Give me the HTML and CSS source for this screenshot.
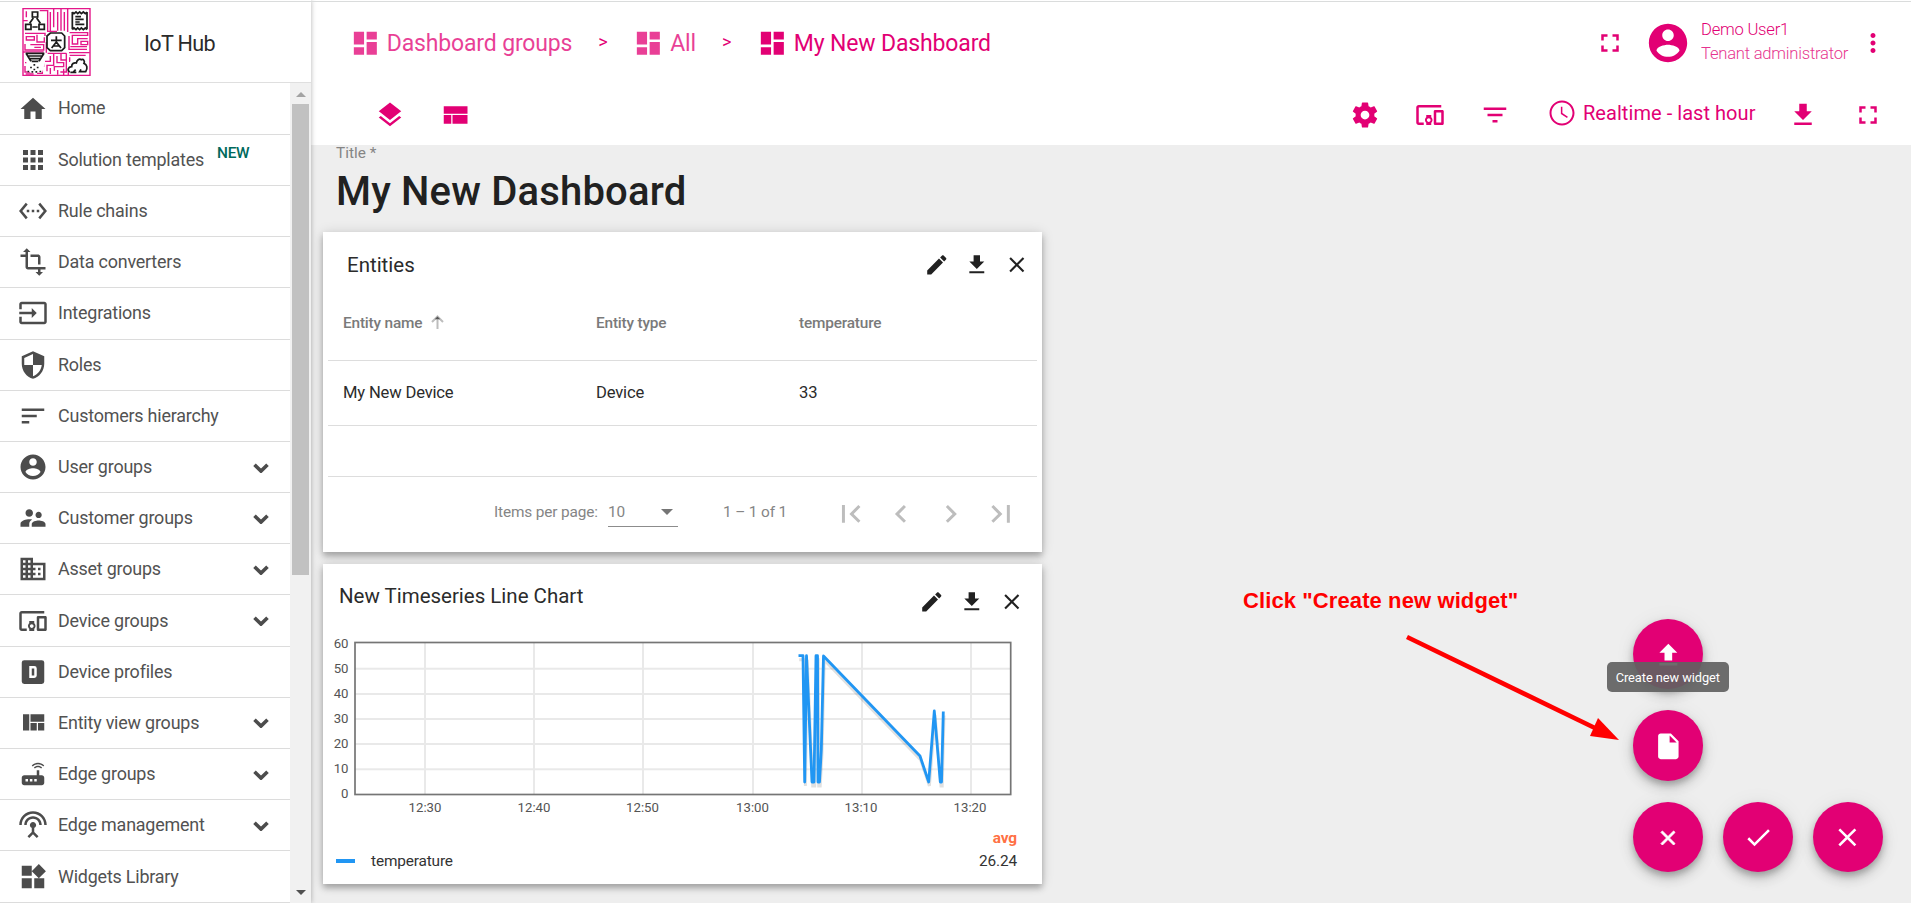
FILE: index.html
```html
<!DOCTYPE html>
<html lang="en">
<head>
<meta charset="utf-8">
<title>IoT Hub - My New Dashboard</title>
<link rel="stylesheet" href="styles.css">
</head>
<body>
<svg class="defs" width="0" height="0">
  <symbol id="home" viewBox="0 0 24 24"><path d="M10 20v-6h4v6h5v-8h3L12 3 2 12h3v8z"/></symbol>
  <symbol id="apps" viewBox="0 0 24 24"><path d="M4 8h4V4H4v4zm6 12h4v-4h-4v4zm-6 0h4v-4H4v4zm0-6h4v-4H4v4zm6 0h4v-4h-4v4zm6-10v4h4V4h-4zm-6 4h4V4h-4v4zm6 6h4v-4h-4v4zm0 6h4v-4h-4v4z"/></symbol>
  <symbol id="ethernet" viewBox="0 0 24 24"><path d="M7.77 6.76L6.23 5.48.82 12l5.41 6.52 1.54-1.28L3.42 12l4.35-5.24zM7 13h2v-2H7v2zm10-2h-2v2h2v-2zm-6 2h2v-2h-2v2zm6.77-7.52l-1.54 1.28L20.58 12l-4.35 5.24 1.54 1.28L23.18 12l-5.41-6.52z"/></symbol>
  <symbol id="transform" viewBox="0 0 24 24"><path d="M22 18v-2H8V4h2L7 1 4 4h2v2H2v2h4v8c0 1.1.9 2 2 2h8v2h-2l3 3 3-3h-2v-2h4zM10 8h6v6h2V8c0-1.1-.9-2-2-2h-6v2z"/></symbol>
  <symbol id="input" viewBox="0 0 24 24"><path d="M21 3.01H3c-1.1 0-2 .9-2 2V9h2V4.99h18v14.03H3V15H1v4.01c0 1.1.9 1.98 2 1.98h18c1.1 0 2-.88 2-1.98v-14c0-1.11-.9-2-2-2zM11 16l4-4-4-4v3H1v2h10v3z"/></symbol>
  <symbol id="security" viewBox="0 0 24 24"><path d="M12 1L3 5v6c0 5.55 3.84 10.74 9 12 5.16-1.26 9-6.45 9-12V5l-9-4zm0 10.99h7c-.53 4.12-3.28 7.79-7 8.94V12H5V6.3l7-3.11v8.8z"/></symbol>
  <symbol id="sort" viewBox="0 0 24 24"><path d="M3 18h6v-2H3v2zM3 6v2h18V6H3zm0 7h12v-2H3v2z"/></symbol>
  <symbol id="account" viewBox="0 0 24 24"><path d="M12 2C6.48 2 2 6.48 2 12s4.48 10 10 10 10-4.48 10-10S17.52 2 12 2zm0 3c1.66 0 3 1.34 3 3s-1.34 3-3 3-3-1.34-3-3 1.34-3 3-3zm0 14.2c-2.5 0-4.71-1.28-6-3.22.03-1.99 4-3.08 6-3.08 1.99 0 5.97 1.09 6 3.08-1.29 1.94-3.5 3.22-6 3.22z"/></symbol>
  <symbol id="supervisor" viewBox="0 0 24 24"><path d="M16.5 12c1.38 0 2.49-1.12 2.49-2.5S17.88 7 16.5 7C15.12 7 14 8.12 14 9.5s1.12 2.5 2.5 2.5zM9 11c1.66 0 2.99-1.34 2.99-3S10.66 5 9 5C7.34 5 6 6.34 6 8s1.34 3 3 3zm7.5 3c-1.83 0-5.5.92-5.5 2.75V19h11v-2.25c0-1.83-3.67-2.75-5.5-2.75zM9 13c-2.33 0-7 1.17-7 3.5V19h7v-2.25c0-.85.33-2.34 2.37-3.47C10.5 13.1 9.66 13 9 13z"/></symbol>
  <symbol id="domain" viewBox="0 0 24 24"><path d="M12 7V3H2v18h20V7H12zM6 19H4v-2h2v2zm0-4H4v-2h2v2zm0-4H4V9h2v2zm0-4H4V5h2v2zm4 12H8v-2h2v2zm0-4H8v-2h2v2zm0-4H8V9h2v2zm0-4H8V5h2v2zm10 12h-8v-2h2v-2h-2v-2h2v-2h-2V9h8v10zm-2-8h-2v2h2v-2zm0 4h-2v2h2v-2z"/></symbol>
  <symbol id="devices" viewBox="0 0 24 24"><path d="M3 6h18V4H3c-1.1 0-2 .9-2 2v12c0 1.1.9 2 2 2h4v-2H3V6zm10 6H9v1.78c-.61.55-1 1.33-1 2.22s.39 1.67 1 2.22V20h4v-1.78c.61-.55 1-1.34 1-2.22s-.39-1.67-1-2.22V12zm-2 5.5c-.83 0-1.5-.67-1.5-1.5s.67-1.5 1.5-1.5 1.5.67 1.5 1.5-.67 1.5-1.5 1.5zM22 8h-6c-.5 0-1 .5-1 1v10c0 .5.5 1 1 1h6c.5 0 1-.5 1-1V9c0-.5-.5-1-1-1zm-1 10h-4v-8h4v8z"/></symbol>
  <symbol id="profile" viewBox="0 0 24 24"><path fill-rule="evenodd" d="M5 2h14a2 2 0 0 1 2 2v16a2 2 0 0 1-2 2H5a2 2 0 0 1-2-2V4a2 2 0 0 1 2-2zM9 7v10h4a2 2 0 0 0 2-2V9a2 2 0 0 0-2-2H9zm2 2h2v6h-2V9z" transform="translate(0 .6) scale(1 .95)"/></symbol>
  <symbol id="quilt" viewBox="0 0 24 24"><path d="M10 18h5v-6h-5v6zm-6 0h5V5H4v13zm12 0h5v-6h-5v6zM10 5v6h11V5H10z"/></symbol>
  <symbol id="router" viewBox="0 0 24 24"><path d="M20.2 5.9l.8-.8C19.6 3.7 17.8 3 16 3s-3.6.7-5 2.1l.8.8C13 4.8 14.5 4.2 16 4.2s3 .6 4.2 1.7zm-.9.8c-.9-.9-2.1-1.4-3.3-1.4s-2.4.5-3.3 1.4l.8.8c.7-.7 1.6-1 2.5-1s1.8.3 2.5 1l.8-.8zM19 13h-2V9h-2v4H5c-1.1 0-2 .9-2 2v4c0 1.1.9 2 2 2h14c1.1 0 2-.9 2-2v-4c0-1.1-.9-2-2-2zM8 18H6v-2h2v2zm3.5 0h-2v-2h2v2zm3.5 0h-2v-2h2v2z"/></symbol>
  <symbol id="antenna" viewBox="0 0 24 24"><path d="M12 5c-3.87 0-7 3.13-7 7h2c0-2.76 2.24-5 5-5s5 2.24 5 5h2c0-3.87-3.13-7-7-7zm1 9.29c.88-.39 1.5-1.26 1.5-2.29 0-1.38-1.12-2.5-2.5-2.5S9.5 10.62 9.5 12c0 1.02.62 1.9 1.5 2.29v3.3L7.59 21 9 22.41l3-3 3 3L16.41 21 13 17.59v-3.3zM12 1C5.93 1 1 5.93 1 12h2c0-4.97 4.03-9 9-9s9 4.03 9 9h2c0-6.07-4.93-11-11-11z"/></symbol>
  <symbol id="widgets" viewBox="0 0 24 24"><path d="M13 13v8h8v-8h-8zM3 21h8v-8H3v8zM3 3v8h8V3H3zm13.66-1.31L11 7.34 16.66 13l5.66-5.66-5.66-5.65z"/></symbol>
  <symbol id="chev" viewBox="0 0 16 10"><path d="M1.5 1.7L8 8.1l6.5-6.4" fill="none" stroke="currentColor" stroke-width="3.6"/></symbol>
  <symbol id="dashboard" viewBox="0 0 24 24"><path d="M3 13h8V3H3v10zm0 8h8v-6H3v6zm10 0h8V11h-8v10zm0-18v6h8V3h-8z"/></symbol>
  <symbol id="layers" viewBox="0 0 24 24"><path d="M11.99 18.54l-7.37-5.73L3 14.07l9 7 9-7-1.63-1.27-7.38 5.74zM12 16l7.36-5.73L21 9l-9-7-9 7 1.63 1.27L12 16z"/></symbol>
  <symbol id="compact" viewBox="0 0 24 24"><path d="M3 19h6v-7H3v7zm7 0h12v-7H10v7zM3 5v6h19V5H3z"/></symbol>
  <symbol id="gear" viewBox="0 0 24 24"><path d="M19.43 12.98c.04-.32.07-.64.07-.98s-.03-.66-.07-.98l2.11-1.65c.19-.15.24-.42.12-.64l-2-3.46c-.12-.22-.39-.3-.61-.22l-2.49 1c-.52-.4-1.08-.73-1.69-.98l-.38-2.65C14.46 2.18 14.25 2 14 2h-4c-.25 0-.46.18-.49.42l-.38 2.65c-.61.25-1.17.59-1.69.98l-2.49-1c-.23-.09-.49 0-.61.22l-2 3.46c-.13.22-.07.49.12.64l2.11 1.65c-.04.32-.07.65-.07.98s.03.66.07.98l-2.11 1.65c-.19.15-.24.42-.12.64l2 3.46c.12.22.39.3.61.22l2.49-1c.52.4 1.08.73 1.69.98l.38 2.65c.03.24.24.42.49.42h4c.25 0 .46-.18.49-.42l.38-2.65c.61-.25 1.17-.59 1.69-.98l2.49 1c.23.09.49 0 .61-.22l2-3.46c.12-.22.07-.49-.12-.64l-2.11-1.65zM12 15.5c-1.93 0-3.5-1.57-3.5-3.5s1.57-3.5 3.5-3.5 3.5 1.57 3.5 3.5-1.57 3.5-3.5 3.5z"/></symbol>
  <symbol id="filter" viewBox="0 0 24 24"><path d="M10 18h4v-2h-4v2zM3 6v2h18V6H3zm3 7h12v-2H6v2z"/></symbol>
  <symbol id="clock" viewBox="0 0 24 24"><path d="M11.99 2C6.47 2 2 6.48 2 12s4.47 10 9.99 10C17.52 22 22 17.52 22 12S17.52 2 11.99 2zM12 20.4c-4.64 0-8.4-3.76-8.4-8.4S7.36 3.6 12 3.6s8.4 3.76 8.4 8.4-3.76 8.4-8.4 8.4zM12.3 7H11.1v5.7l4.9 3.2.7-1-4.4-2.9z"/></symbol>
  <symbol id="download" viewBox="0 0 24 24"><path d="M19 9h-4V3H9v6H5l7 7 7-7zM5 18v2h14v-2H5z"/></symbol>
  <symbol id="upload" viewBox="0 0 24 24"><path d="M9 16h6v-6h4l-7-7-7 7h4zm-4 2h14v2H5z"/></symbol>
  <symbol id="full" viewBox="0 0 24 24"><path d="M7 14H5v5h5v-2H7v-3zm-2-4h2V7h3V5H5v5zm12 7h-3v2h5v-5h-2v3zM14 5v2h3v3h2V5h-5z"/></symbol>
  <symbol id="more" viewBox="0 0 24 24"><path d="M12 8c1.1 0 2-.9 2-2s-.9-2-2-2-2 .9-2 2 .9 2 2 2zm0 2c-1.1 0-2 .9-2 2s.9 2 2 2 2-.9 2-2-.9-2-2-2zm0 6c-1.1 0-2 .9-2 2s.9 2 2 2 2-.9 2-2-.9-2-2-2z"/></symbol>
  <symbol id="edit" viewBox="0 0 24 24"><path d="M3 17.25V21h3.75L17.81 9.94l-3.75-3.75L3 17.25zM20.71 7.04c.39-.39.39-1.02 0-1.41l-2.34-2.34c-.39-.39-1.02-.39-1.41 0l-1.83 1.83 3.75 3.75 1.83-1.83z"/></symbol>
  <symbol id="close" viewBox="0 0 24 24"><path d="M19 6.41L17.59 5 12 10.59 6.41 5 5 6.41 10.59 12 5 17.59 6.41 19 12 13.41 17.59 19 19 17.59 13.41 12z"/></symbol>
  <symbol id="check" viewBox="0 0 24 24"><path d="M9 16.17L4.83 12l-1.42 1.41L9 19 21 7l-1.41-1.41z"/></symbol>
  <symbol id="file" viewBox="0 0 24 24"><path d="M6 2c-1.1 0-1.99.9-1.99 2L4 20c0 1.1.89 2 1.99 2H18c1.1 0 2-.9 2-2V8l-6-6H6zm7 7V3.5L18.5 9H13z"/></symbol>
  <symbol id="first" viewBox="0 0 24 24"><path d="M18.41 16.59L13.82 12l4.59-4.59L17 6l-6 6 6 6zM6 6h2v12H6z"/></symbol>
  <symbol id="prev" viewBox="0 0 24 24"><path d="M15.41 7.41L14 6l-6 6 6 6 1.41-1.41L10.83 12z"/></symbol>
  <symbol id="next" viewBox="0 0 24 24"><path d="M10 6L8.59 7.41 13.17 12l-4.58 4.59L10 18l6-6z"/></symbol>
  <symbol id="last" viewBox="0 0 24 24"><path d="M5.59 7.41L10.18 12l-4.59 4.59L7 18l6-6-6-6zM16 6h2v12h-2z"/></symbol>
</svg>

<div class="app">
  <aside class="sidebar">
    <header class="brand">
      <svg class="logo" viewBox="36 24 205 204">
        <rect x="36" y="24" width="205" height="204" fill="#fff"/>
        <g class="maze">
          <path d="M38 24V228M36 26H241M239 24V228M36 226H241"/>
          <path d="M88 32H112V60M120 36V92M130 26V82M142 36V92M152 26V92M162 36V92M172 26V96M110 94H140M112 60V94M48 34V52M38 62H52"/>
          <path d="M44 100H104V108M48 110H72V120H48ZM80 104V126H102V112M44 132V150H100V134H60M72 142H92M108 126V158M38 156H100"/>
          <path d="M178 98H232V106H186V132H202V116H232M212 124H232V134H212ZM176 108V148H230M176 158H238M180 140H230M178 166H226"/>
          <path d="M112 160H168M120 168V184H104M130 162V196H110V214M140 168V188H160V200H132V212M152 162V180H168M168 160V216H150M120 204V222M142 210V224M160 206V226M178 172V186M184 216H174V226"/>
          <path d="M44 188H56M44 198V216H60M100 188V198H92M96 208V220H80M46 222H70"/>
        </g>
        <g class="knock">
          <path d="M62 32h26v22h14v38H42V68h20zM182 32h50v60h-50zM110 96h56v56h-56zM44 158h60v30l-8 28H52zM170 196l22-24h26l16 22v26h-56z"/>
        </g>
        <g class="ink">
          <path d="M66 36H82V51H66ZM46 73H62V88H46ZM86 73H102V88H86ZM69 54L58 70M79 54L90 70M66 81H82M186 36V88M230 36V88M186 36l5 5 6-5 5 5 6-5 5 5 6-5 6 5 5-5M186 89l5-5 6 5 5-5 6 5 5-5 6 5 6-5 5 5M195 50H212M195 58H220M195 66H208M195 73H222"/>
          <path d="M120 99H154L163 108V143L154 152H120L110 143V108ZM138 109V128M122 121H154M138 126L124 144M138 126L152 144M128 138H148" />
          <path d="M46 160H102M50 168H98M56 176H92M64 184H84M47 160L62 184M101 160L86 184"/>
          <path d="M72 192v5M62 200v5M82 200v5M72 206v5M54 212v5M66 213v5M78 213v5M90 212v5"/>
          <path d="M178 216c-8-5-5-15 6-16 0-9 6-13 14-11 2-9 8-14 15-10 7-3 11 5 8 11 9 3 12 15 5 25H208l4-7M188 217l8-8M180 217H198"/>
        </g>
      </svg>
      <span class="brand-name">IoT Hub</span>
    </header>
    <div class="side-body">
      <nav class="menu">
        <a class="item"><svg><use href="#home"/></svg><span>Home</span></a>
        <a class="item"><svg><use href="#apps"/></svg><span>Solution templates</span><sup>NEW</sup></a>
        <a class="item"><svg><use href="#ethernet"/></svg><span>Rule chains</span></a>
        <a class="item"><svg><use href="#transform"/></svg><span>Data converters</span></a>
        <a class="item"><svg><use href="#input"/></svg><span>Integrations</span></a>
        <a class="item"><svg><use href="#security"/></svg><span>Roles</span></a>
        <a class="item"><svg><use href="#sort"/></svg><span>Customers hierarchy</span></a>
        <a class="item"><svg><use href="#account"/></svg><span>User groups</span><svg class="chev"><use href="#chev"/></svg></a>
        <a class="item"><svg><use href="#supervisor"/></svg><span>Customer groups</span><svg class="chev"><use href="#chev"/></svg></a>
        <a class="item"><svg><use href="#domain"/></svg><span>Asset groups</span><svg class="chev"><use href="#chev"/></svg></a>
        <a class="item"><svg><use href="#devices"/></svg><span>Device groups</span><svg class="chev"><use href="#chev"/></svg></a>
        <a class="item"><svg><use href="#profile"/></svg><span>Device profiles</span></a>
        <a class="item"><svg><use href="#quilt"/></svg><span>Entity view groups</span><svg class="chev"><use href="#chev"/></svg></a>
        <a class="item"><svg><use href="#router"/></svg><span>Edge groups</span><svg class="chev"><use href="#chev"/></svg></a>
        <a class="item"><svg><use href="#antenna"/></svg><span>Edge management</span><svg class="chev"><use href="#chev"/></svg></a>
        <a class="item"><svg><use href="#widgets"/></svg><span>Widgets Library</span></a>
      </nav>
      <div class="scrollbar"><i class="up"></i><b></b><i class="down"></i></div>
    </div>
  </aside>

  <main class="main">
    <header class="topbar">
      <nav class="crumbs">
        <a class="crumb dim"><svg><use href="#dashboard"/></svg><span>Dashboard groups</span></a>
        <span class="sep">&gt;</span>
        <a class="crumb dim"><svg><use href="#dashboard"/></svg><span>All</span></a>
        <span class="sep">&gt;</span>
        <a class="crumb"><svg><use href="#dashboard"/></svg><span>My New Dashboard</span></a>
      </nav>
      <div class="user">
        <svg class="ic"><use href="#full"/></svg>
        <svg class="avatar"><use href="#account"/></svg>
        <div class="who"><span>Demo User1</span><span class="role">Tenant administrator</span></div>
        <svg class="ic"><use href="#more"/></svg>
      </div>
    </header>
    <div class="toolbar">
      <div class="tools-left">
        <svg class="ic"><use href="#layers"/></svg>
        <svg class="ic"><use href="#compact"/></svg>
      </div>
      <div class="tools-right">
        <svg class="ic"><use href="#gear"/></svg>
        <svg class="ic"><use href="#devices"/></svg>
        <svg class="ic"><use href="#filter"/></svg>
        <div class="timewindow"><svg class="ic"><use href="#clock"/></svg><span>Realtime - last hour</span></div>
        <svg class="ic"><use href="#download"/></svg>
        <svg class="ic"><use href="#full"/></svg>
      </div>
    </div>

    <section class="canvas">
      <label class="title-label">Title *</label>
      <h1 class="title">My New Dashboard</h1>

      <article class="card entities">
        <header class="card-head">
          <h2>Entities</h2>
          <div class="actions"><svg><use href="#edit"/></svg><svg><use href="#download"/></svg><svg><use href="#close"/></svg></div>
        </header>
        <div class="table">
          <div class="row head"><span>Entity name <svg class="arrow" viewBox="0 0 13 14"><path d="M6.5 14V2M1 7l5.5-5.5L12 7" fill="none" stroke="#bdbdbd" stroke-width="2"/><path d="M3.8 4.2L6.5 1.5l2.7 2.7z" fill="#555"/></svg></span><span>Entity type</span><span>temperature</span></div>
          <div class="row"><span>My New Device</span><span>Device</span><span>33</span></div>
          <div class="row blank"></div>
        </div>
        <footer class="pager">
          <span class="ipp">Items per page:</span>
          <span class="select">10<i></i></span>
          <span class="range">1 – 1 of 1</span>
          <div class="pages"><svg><use href="#first"/></svg><svg><use href="#prev"/></svg><svg><use href="#next"/></svg><svg><use href="#last"/></svg></div>
        </footer>
      </article>

      <article class="card chart">
        <header class="card-head">
          <h2>New Timeseries Line Chart</h2>
          <div class="actions"><svg><use href="#edit"/></svg><svg><use href="#download"/></svg><svg><use href="#close"/></svg></div>
        </header>
        <svg class="plot" viewBox="323 630 719 190">
          <g class="grid">
            <path d="M355 668.7H1011M355 693.9H1011M355 719H1011M355 744H1011M355 769.2H1011M425 643V794M534 643V794M643 643V794M753 643V794M862 643V794M971 643V794"/>
          </g>
          <rect x="355" y="642.5" width="655.7" height="152" class="frame"/>
          <path class="shade" transform="translate(.7 4)" d="M798.5 655.7H803L804.7 782 806.5 655.7 812 782H814L816 655.7H817.5L818 782H819.5L821.3 750 823.5 656 920 756 928.7 782 934.3 711 940.3 782H941.5L943.3 711.5"/>
          <path class="line" d="M798.5 655.7H803L804.7 782 806.5 655.7 812 782H814L816 655.7H817.5L818 782H819.5L821.3 750 823.5 656 920 756 928.7 782 934.3 711 940.3 782H941.5L943.3 711.5"/>
          <g class="ylab">
            <text x="348.5" y="648">60</text><text x="348.5" y="673">50</text><text x="348.5" y="698">40</text><text x="348.5" y="723">30</text><text x="348.5" y="748">20</text><text x="348.5" y="773">10</text><text x="348.5" y="798">0</text>
          </g>
          <g class="xlab">
            <text x="425" y="812">12:30</text><text x="534" y="812">12:40</text><text x="642.5" y="812">12:50</text><text x="752.5" y="812">13:00</text><text x="861" y="812">13:10</text><text x="970" y="812">13:20</text>
          </g>
        </svg>
        <div class="legend">
          <b class="avg">avg</b>
          <div class="series"><i></i><span>temperature</span><span class="val">26.24</span></div>
        </div>
      </article>
    </section>
  </main>

  <div class="fabs">
    <div class="fab-col">
      <button class="fab"><svg><use href="#upload"/></svg></button>
      <button class="fab"><svg><use href="#file"/></svg></button>
      <button class="fab"><svg class="x"><use href="#close"/></svg></button>
      <span class="tooltip">Create new widget</span>
    </div>
    <button class="fab"><svg><use href="#check"/></svg></button>
    <button class="fab"><svg><use href="#close"/></svg></button>
  </div>

  <div class="callout">Click "Create new widget"</div>
  <svg class="pointer" viewBox="0 0 216 110"><path d="M2 4L192 96" stroke="#f00" stroke-width="4.6"/><path d="M193 85L214 107 185 103z" fill="#f00"/></svg>
</div>
</body>
</html>
```
FILE: styles.css
```css
* { box-sizing: border-box; }
body { margin: 0; font-family: Roboto, "Open Sans", sans-serif; overflow: hidden; background: #eee; }
svg { fill: currentColor; display: block; flex: none; }
.defs { position: absolute; }
.app { position: relative; display: flex; width: 1911px; height: 903px; overflow: hidden; }
.app::before { content: ""; position: absolute; z-index: 5; left: 0; right: 0; top: 1px; height: 1px; background: #dadcdc; }

/* Sidebar */
.sidebar { width: 311px; flex: none; display: flex; flex-direction: column; background: #fff; z-index: 3; box-shadow: 0 0 5px rgba(0,0,0,.3); }
.brand { height: 83px; flex: none; display: flex; align-items: center; padding: 2px 0 0 22px; border-bottom: 1px solid #dfdfdf; }
.logo { width: 69px; height: 68px; }
.maze path { fill: none; stroke: #e4178a; stroke-width: 4.2; }
.knock { fill: #fff; }
.ink path { fill: none; stroke: #1c1c1c; stroke-width: 5.2; }
.brand-name { margin: 2px 0 0 53px; font-size: 21.6px; letter-spacing: -.65px; color: #2b2b2b; }
.side-body { flex: 1; display: flex; min-height: 0; }
.menu { width: 290px; padding-top: .6px; }
.item { position: relative; height: 51.2px; display: flex; align-items: center; padding-left: 18px; border-bottom: 1px solid #dcdcdc; font-size: 17.92px; letter-spacing: -.2px; color: #4c4c4c; }
.item svg { width: 30px; height: 30px; }
.item span { margin: -1px 0 0 10px; color: #525252; }
.item:first-child span { margin-top: -2px; }
.item sup { margin: -14px 0 0 13px; font-size: 15.4px; line-height: 18px; font-weight: 500; letter-spacing: -.3px; color: #00695c; vertical-align: baseline; }
.item svg.chev { width: 16px; height: 10px; margin: 1px 21.5px 0 auto; }
.scrollbar { width: 21px; background: #f1f1f1; display: flex; flex-direction: column; align-items: center; }
.scrollbar b { width: 17px; height: 471px; margin-top: 7px; background: #c1c1c1; }
.scrollbar i { border: 5px solid transparent; }
.scrollbar .up { border-top: 0; border-bottom-color: #a3a3a3; margin-top: 9px; }
.scrollbar .down { border-bottom: 0; border-top-color: #505050; margin: auto 0 8px; }

/* Header bars */
.main { flex: 1; display: flex; flex-direction: column; min-width: 0; color: #e20074; }
.topbar { height: 82px; flex: none; background: #fff; display: flex; justify-content: space-between; align-items: center; padding: 4px 23px 0 39px; }
.ic { width: 30px; height: 30px; }
.crumbs { display: flex; align-items: center; font-size: 23px; letter-spacing: -.15px; }
.crumb { display: flex; align-items: center; gap: 6px; }
.crumb svg { width: 30.7px; height: 30.7px; }
.dim { opacity: .75; }
.sep { width: 61.2px; text-align: center; font-size: 18px; padding-bottom: 4px; }
.user { display: flex; align-items: center; }
.avatar { width: 46px; height: 46px; margin: 0 10px 0 20px; }
.who { width: 157px; margin-top: -2px; display: flex; flex-direction: column; font-size: 16.6px; line-height: 24px; font-weight: 300; letter-spacing: -.22px; }
.role { opacity: .8; }
.toolbar { height: 63px; flex: none; background: #fff; display: flex; justify-content: space-between; align-items: center; padding: 3px 28px 0 64px; }
.tools-left { display: flex; gap: 35px; }
.tools-right { display: flex; align-items: center; gap: 35px; }
.timewindow { display: flex; align-items: center; gap: 6px; font-size: 20px; letter-spacing: .05px; white-space: nowrap; width: 208px; margin: -4px -2px 0 2px; }

/* Dashboard */
.canvas { flex: 1; padding: 0 0 0 12px; color: #212121; }
.title-label { display: block; margin: -2px 0 0 13px; font-size: 15.4px; line-height: 20px; color: #858585; }
.title { margin: 5px 0 0 13px; font-size: 40px; line-height: 48px; letter-spacing: .18px; font-weight: 500; height: 64px; }
.card { width: 719px; height: 320px; background: #fff; box-shadow: 0 4px 6px rgba(0,0,0,.26), 0 1px 12px rgba(0,0,0,.14); display: flex; flex-direction: column; }
.card-head { display: flex; justify-content: space-between; }
.card-head h2 { margin: 0; font-size: 20.48px; font-weight: 400; line-height: 24px; color: #2b2b2b; }
.actions { display: flex; gap: 14.4px; }
.actions svg { width: 25.6px; height: 25.6px; }
.entities .card-head { padding: 20px 12.5px 0 24px; height: 49px; }
.entities h2 { padding-top: 1px; }
.table { margin: 0 5px; font-size: 16.6px; letter-spacing: -.18px; color: #2b2b2b; }
.row { display: grid; grid-template-columns: 253px 203px 1fr; align-items: center; padding: 0 0 2px 15px; height: 65px; border-bottom: 1px solid #ddd; }
.row.head { height: 80px; padding-top: 4px; padding-bottom: 0; font-size: 15.4px; font-weight: 500; color: #7a7a7a; }
.row.head span { display: flex; align-items: center; gap: 9px; }
.arrow { width: 13px; height: 14px; margin-top: -2px; }
.row.blank { height: 51px; }
.pager { display: flex; align-items: center; flex: 1; padding-bottom: 2px; font-size: 15.4px; letter-spacing: -.14px; color: #858585; }
.ipp { margin-left: 171px; width: 114px; white-space: nowrap; }
.ipp, .range { padding-bottom: 3px; }
.select { display: flex; justify-content: space-between; align-items: center; width: 70px; height: 28px; padding: 0 5px 2px 0; border-bottom: 1px solid #8c8c8c; }
.select i { border: 6.5px solid transparent; border-top-color: #757575; border-bottom: 0; }
.pager .select { margin-top: -1px; }
.range { margin-left: 45px; width: 110px; }
.pages { display: flex; gap: 14.3px; color: #bdbdbd; padding-top: 1px; }
.pages svg { width: 35.8px; height: 35.8px; }

.chart { margin-top: 12.4px; color: #333; }
.chart .card-head { padding: 19.5px 17.5px 0 16px; height: 65.6px; }
.chart .actions { padding-top: 5px; color: #212121; }
.plot { width: 719px; height: 190px; }
.grid path { stroke: rgba(84,84,84,.13); stroke-width: 2; }
.frame { fill: none; stroke: #757575; stroke-width: 1.7; }
.line { fill: none; stroke: #2196f3; stroke-width: 2.8; stroke-linejoin: round; }
.shade { fill: none; stroke: rgba(0,0,0,.12); stroke-width: 3; }
.ylab, .xlab { font-size: 13.2px; fill: #545454; }
.ylab { text-anchor: end; }
.xlab { text-anchor: middle; }
.legend { font-size: 15.4px; letter-spacing: -.15px; padding: 7px 25px 0 13px; display: flex; flex-direction: column; }
.avg { color: #ff7043; text-align: right; line-height: 22px; }
.series { display: flex; align-items: center; line-height: 24px; }
.series i { width: 19px; height: 4px; margin-right: 16px; background: #2196f3; }
.val { margin-left: auto; }

/* Floating actions and annotation */
.fabs { position: absolute; right: 28px; bottom: 31px; z-index: 4; display: flex; align-items: flex-end; gap: 19.5px; }
.fab-col { position: relative; display: flex; flex-direction: column; gap: 21px; }
.fab { width: 70.4px; height: 70.4px; padding: 0; border: 0; border-radius: 50%; background: #e20074; color: #fff; display: flex; align-items: center; justify-content: center; box-shadow: 0 4px 6px rgba(0,0,0,.22), 0 7px 14px rgba(0,0,0,.14), 0 1px 22px rgba(0,0,0,.06); }
.fab svg { width: 30.7px; height: 30.7px; margin-top: 2px; }
.fab svg.x { width: 24px; height: 24px; stroke: #fff; }
.tooltip { position: absolute; top: 43px; left: -26px; width: 122px; height: 30px; border-radius: 5px; background: rgba(97,97,97,.92); color: #fff; font-size: 12.8px; line-height: 31px; letter-spacing: -.05px; text-align: center; white-space: nowrap; }
.callout { position: absolute; left: 1243px; top: 588px; font: bold 22px/26px "Liberation Sans", Arial, sans-serif; letter-spacing: .1px; color: #f00; white-space: nowrap; }
.pointer { position: absolute; left: 1405px; top: 633px; width: 216px; height: 110px; }
```
